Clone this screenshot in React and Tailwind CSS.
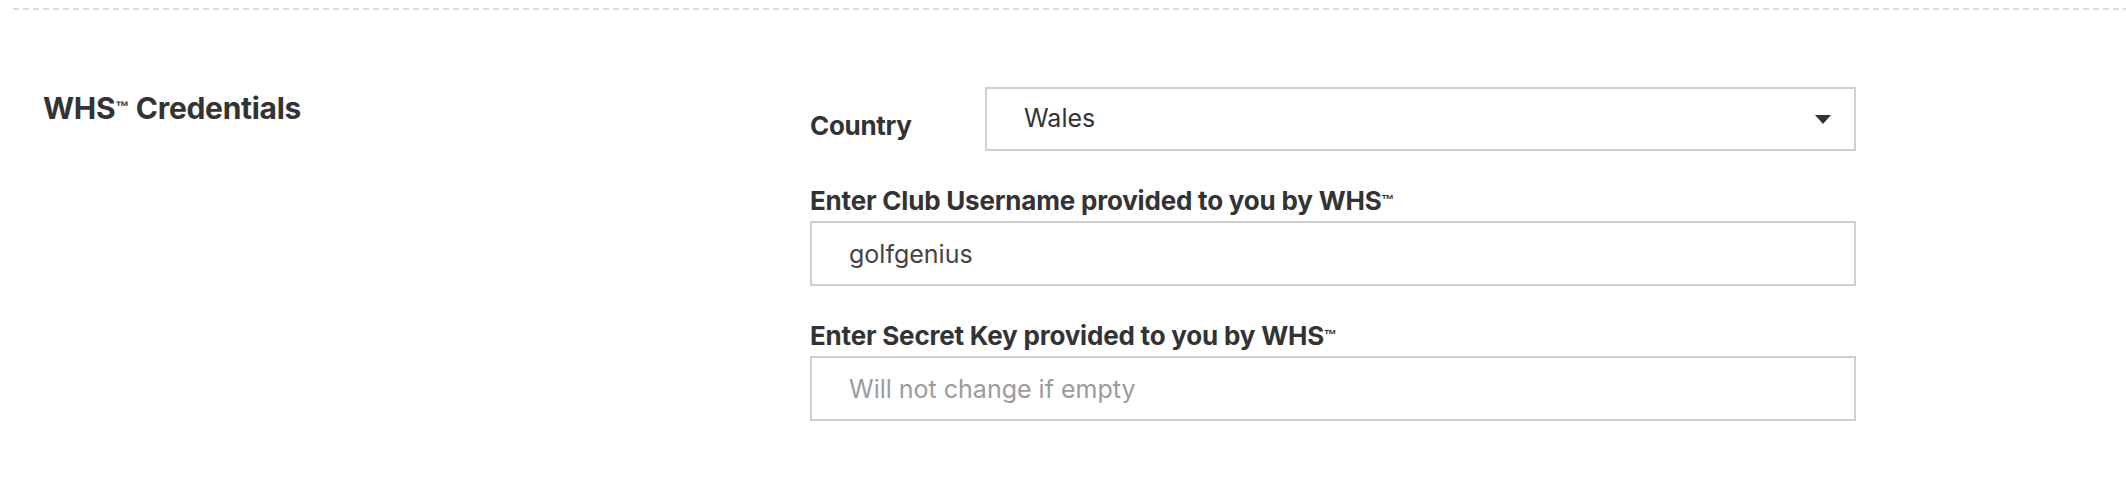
import React from "react";

const Tm = ({ className }) => (
  <sup className={`font-['Liberation_Sans',sans-serif] font-bold ${className}`}>™</sup>
);

const Field = ({ label, value, placeholder }) => (
  <div className="flex flex-col">
    <label className="text-[26px] leading-[30px] font-bold text-[#333] tracking-[-0.2px]">
      {label}
      <Tm className="text-[13px] relative -top-[6px]" />
    </label>
    <input
      className="mt-[5px] h-[65px] w-full border-2 border-[#cfcfcf] bg-white px-[37px] text-[25px] text-[#444] placeholder:text-[#9b9b9b] outline-none"
      defaultValue={value}
      placeholder={placeholder}
    />
  </div>
);

const App = () => {
  return (
    <div className="w-[2126px] h-[498px] bg-white font-['Inter',sans-serif] text-[#333]">
      <div className="pt-[8px] pl-[13px]">
        <div className="h-[2px] w-full bg-[repeating-linear-gradient(90deg,#dcdcdc_0_6px,transparent_6px_10px)]" />
      </div>
      <div className="flex pt-[77px]">
        <div className="w-[810px] pl-[43px] pt-[3px]">
          <h2 className="text-[30px] leading-[36px] font-bold tracking-[-0.3px]">
            WHS<Tm className="text-[14px] relative -top-[8px]" /> Credentials
          </h2>
        </div>
        <div className="w-[1046px] flex flex-col gap-[35px]">
          <div className="flex items-center">
            <div className="w-[175px] pt-[12px] text-[26px] font-bold tracking-[-0.3px]">Country</div>
            <div className="flex-1 h-[64px] border-2 border-[#cfcfcf] flex items-center justify-between pl-[37px] pr-[23px]">
              <span className="text-[25px] text-[#333]">Wales</span>
              <svg width="16" height="9" viewBox="0 0 16 9">
                <path d="M0 0 H16 L8 9 Z" fill="#333" />
              </svg>
            </div>
          </div>
          <Field label="Enter Club Username provided to you by WHS" value="golfgenius" />
          <Field label="Enter Secret Key provided to you by WHS" placeholder="Will not change if empty" />
        </div>
      </div>
    </div>
  );
};

export default App;
